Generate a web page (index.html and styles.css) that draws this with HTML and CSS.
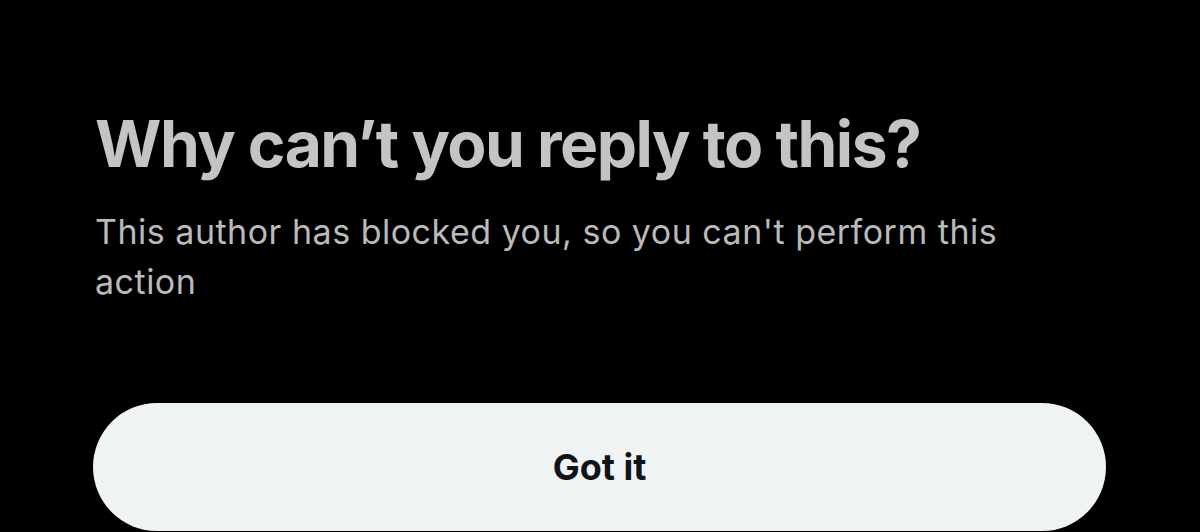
FILE: index.html
```html
<!DOCTYPE html>
<html lang="en">
<head>
  <meta charset="UTF-8" />
  <meta name="viewport" content="width=device-width, initial-scale=1.0"/>
  <title>Why can't you reply to this?</title>
  <link rel="stylesheet" href="styles.css">
</head>

<body>
  <div class="sheet">
    <div class="sheet-body">
      <h1 class="sheet-title">Why can’t you reply to this?</h1>
      <p class="sheet-text">This author has blocked you, so you can't perform this action</p>
    </div>
    <button class="sheet-button" type="button">Got it</button>
  </div>
</body>
</html>
```

FILE: styles.css
```css
:root {
  --sheet-background: #000000;
  --title-color: #c4c4c4;
  --text-color: #bababa;
  --button-background: #eff3f4;
  --button-color: #0f1419;
}
body {
  background-color: var(--sheet-background);
  font-family: Inter, "Noto Sans", sans-serif;
  margin: 0;
  width: 100vw;
  height: 100vh;
  overflow: hidden;
}
.sheet {
  padding: 106px 94px 0 93px;
  display: flex;
  flex-direction: column;
}
.sheet-body {
  padding-left: 2px;
}
.sheet-title {
  color: var(--title-color);
  font-size: 64px;
  font-weight: 700;
  line-height: 76px;
  letter-spacing: -1.5px;
  margin: 0;
}
.sheet-text {
  color: var(--text-color);
  font-size: 34px;
  font-weight: 400;
  line-height: 50px;
  letter-spacing: 0.5px;
  margin: 25px 0 0;
  max-width: 930px;
}
.sheet-button {
  margin-top: 96px;
  height: 128px;
  border: none;
  border-radius: 64px;
  background-color: var(--button-background);
  color: var(--button-color);
  font-family: inherit;
  font-size: 36px;
  font-weight: 700;
  flex-shrink: 0;
}
```
